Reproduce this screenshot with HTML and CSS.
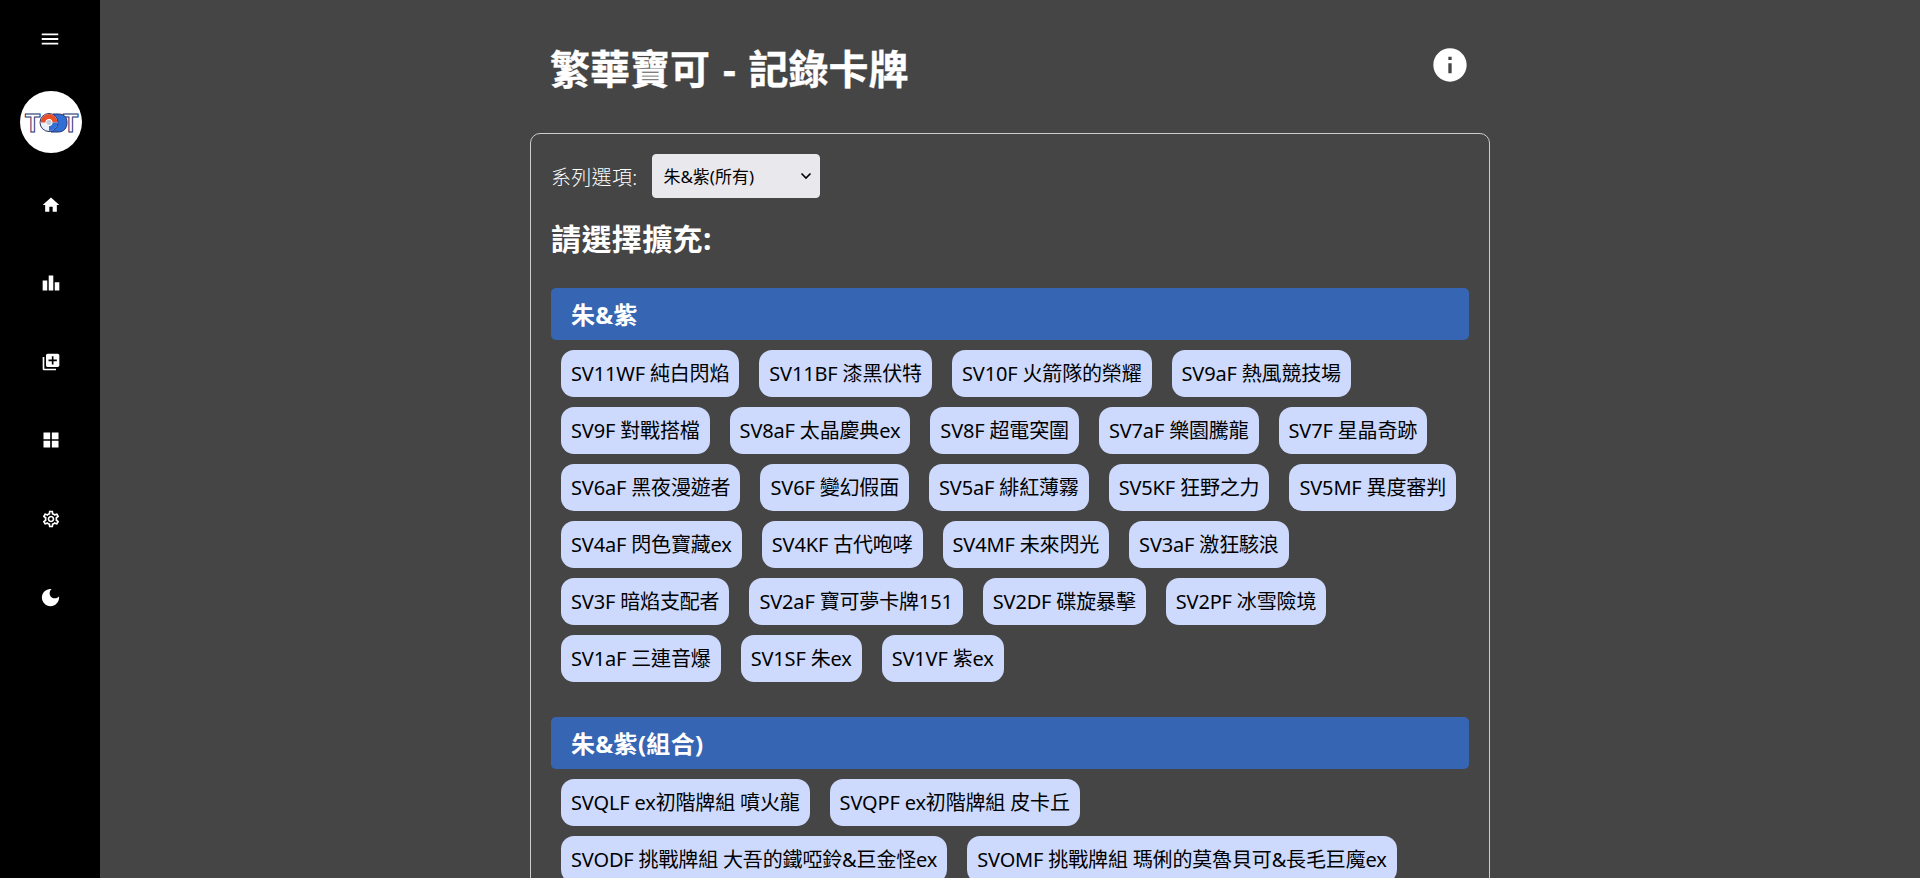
FILE: index.html
```html
<!DOCTYPE html>
<html lang="zh-Hant">
<head>
<meta charset="utf-8">
<title>繁華寶可 - 記錄卡牌</title>
<link rel="stylesheet" href="styles.css">
</head>
<body>
<div class="app">
  <nav class="sidebar">
    <svg class="menu-icon" viewBox="0 0 24 24"><path d="M3 18h18v-2H3v2zm0-5h18v-2H3v2zm0-7v2h18V6H3z"/></svg>
    <div class="logo">
      <svg viewBox="0 0 62 62" width="62" height="62">
        <text x="5" y="41" class="logo-letter">T</text>
        <text x="43" y="41" class="logo-letter">T</text>
        <path d="M33 23h5c6 0 9 3 9 8.500s-3 9.500-9 9.500h-7z" fill="#2f6fd6" stroke="#25336f"/>
        <circle cx="29" cy="31.500" r="9" fill="#eef0f6" stroke="#25336f"/>
        <path d="M20.500 31.500a8.500 8.500 0 0 1 17 0z" fill="#e8502a"/>
        <path d="M29 40a8.500 8.500 0 0 0 8.500-8.500H29z" fill="#2f6fd6"/>
        <circle cx="29" cy="31.500" r="3.200" fill="#c4cad8" stroke="#fff"/>
      </svg>
    </div>
    <div class="nav-slot"><svg class="icon" viewBox="0 0 24 24"><path d="M10 20v-6h4v6h5v-8h3L12 3 2 12h3v8z"/></svg></div>
    <div class="nav-slot"><svg class="icon" viewBox="0 0 24 24"><path d="M7.500 21H2V9h5.500v12zm7.250-18h-5.500v18h5.500V3zM22 11h-5.500v10H22V11z"/></svg></div>
    <div class="nav-slot"><svg class="icon" viewBox="0 0 24 24"><path d="M4 6H2v14c0 1.100.9 2 2 2h14v-2H4V6zm16-4H8c-1.100 0-2 .9-2 2v12c0 1.100.9 2 2 2h12c1.100 0 2-.9 2-2V4c0-1.100-.9-2-2-2zm-1 9h-4v4h-2v-4H9V9h4V5h2v4h4v2z"/></svg></div>
    <div class="nav-slot"><svg class="icon" viewBox="0 0 24 24"><path d="M3 3v8h8V3H3zm10 0v8h8V3h-8zM3 13v8h8v-8H3zm10 0v8h8v-8h-8z"/></svg></div>
    <div class="nav-slot"><svg class="icon" viewBox="0 0 24 24"><path d="M19.43 12.98c.04-.32.07-.64.07-.98 0-.34-.03-.66-.07-.98l2.11-1.65c.19-.15.24-.42.12-.64l-2-3.46c-.09-.16-.26-.25-.44-.25-.06 0-.12.01-.17.03l-2.49 1c-.52-.4-1.08-.73-1.69-.98l-.38-2.65C14.46 2.18 14.25 2 14 2h-4c-.25 0-.46.18-.49.42l-.38 2.65c-.61.25-1.17.59-1.69.98l-2.49-1c-.06-.02-.12-.03-.18-.03-.17 0-.34.09-.43.25l-2 3.46c-.13.22-.07.49.12.64l2.11 1.65c-.04.32-.07.65-.07.98 0 .33.03.66.07.98l-2.11 1.65c-.19.15-.24.42-.12.64l2 3.46c.09.16.26.25.44.25.06 0 .12-.01.17-.03l2.49-1c.52.4 1.08.73 1.69.98l.38 2.65c.03.24.24.42.49.42h4c.25 0 .46-.18.49-.42l.38-2.65c.61-.25 1.17-.59 1.69-.98l2.49 1c.06.02.12.03.18.03.17 0 .34-.09.43-.25l2-3.46c.12-.22.07-.49-.12-.64l-2.11-1.65zm-1.98-1.71c.04.31.05.52.05.73 0 .21-.02.43-.05.73l-.14 1.13.89.7 1.08.84-.7 1.21-1.27-.51-1.04-.42-.9.68c-.43.32-.84.56-1.25.73l-1.06.43-.16 1.13-.2 1.35h-1.4l-.19-1.35-.16-1.13-1.06-.43c-.43-.18-.83-.41-1.23-.71l-.91-.7-1.06.43-1.27.51-.7-1.21 1.08-.84.89-.7-.14-1.13c-.03-.31-.05-.54-.05-.74s.02-.43.05-.73l.14-1.13-.89-.7-1.08-.84.7-1.21 1.27.51 1.04.42.9-.68c.43-.32.84-.56 1.25-.73l1.06-.43.16-1.13.2-1.35h1.39l.19 1.35.16 1.13 1.06.43c.43.18.83.41 1.23.71l.91.7 1.06-.43 1.27-.51.7 1.21-1.07.85-.89.7.14 1.13zM12 8c-2.21 0-4 1.79-4 4s1.79 4 4 4 4-1.79 4-4-1.79-4-4-4zm0 6c-1.100 0-2-.9-2-2s.9-2 2-2 2 .9 2 2-.9 2-2 2z"/></svg></div>
    <div class="nav-slot"><svg class="icon moon" viewBox="0 0 24 24"><path d="M12 3c-4.970 0-9 4.030-9 9s4.030 9 9 9 9-4.030 9-9c0-.46-.04-.92-.1-1.360-.98 1.370-2.580 2.260-4.400 2.260-2.980 0-5.400-2.420-5.400-5.400 0-1.810.89-3.420 2.260-4.400-.44-.06-.9-.1-1.360-.1z"/></svg></div>
  </nav>
  <main class="main">
    <div class="container">
      <header class="page-header">
        <h1 class="title">繁華寶可 - 記錄卡牌</h1>
        <svg class="info-icon" viewBox="0 0 24 24"><path d="M12 2C6.480 2 2 6.480 2 12s4.480 10 10 10 10-4.480 10-10S17.520 2 12 2zm1 15h-2v-6h2v6zm0-8h-2V7h2v2z"/></svg>
      </header>
      <section class="card">
        <div class="series-row">
          <label class="series-label" for="series">系列選項:</label>
          <select class="series-select" id="series"><option>朱&amp;紫(所有)</option></select>
        </div>
        <h2 class="pick-title">請選擇擴充:</h2>
        <div class="group">
          <h3 class="group-title">朱&amp;紫</h3>
          <div class="chips">
            <a class="chip">SV11WF 純白閃焰</a>
            <a class="chip">SV11BF 漆黑伏特</a>
            <a class="chip">SV10F 火箭隊的榮耀</a>
            <a class="chip">SV9aF 熱風競技場</a>
            <a class="chip">SV9F 對戰搭檔</a>
            <a class="chip">SV8aF 太晶慶典ex</a>
            <a class="chip">SV8F 超電突圍</a>
            <a class="chip">SV7aF 樂園騰龍</a>
            <a class="chip">SV7F 星晶奇跡</a>
            <a class="chip">SV6aF 黑夜漫遊者</a>
            <a class="chip">SV6F 變幻假面</a>
            <a class="chip">SV5aF 緋紅薄霧</a>
            <a class="chip">SV5KF 狂野之力</a>
            <a class="chip">SV5MF 異度審判</a>
            <a class="chip">SV4aF 閃色寶藏ex</a>
            <a class="chip">SV4KF 古代咆哮</a>
            <a class="chip">SV4MF 未來閃光</a>
            <a class="chip">SV3aF 激狂駭浪</a>
            <a class="chip">SV3F 暗焰支配者</a>
            <a class="chip">SV2aF 寶可夢卡牌151</a>
            <a class="chip">SV2DF 碟旋暴擊</a>
            <a class="chip">SV2PF 冰雪險境</a>
            <a class="chip">SV1aF 三連音爆</a>
            <a class="chip">SV1SF 朱ex</a>
            <a class="chip">SV1VF 紫ex</a>
          </div>
        </div>
        <div class="group">
          <h3 class="group-title">朱&amp;紫(組合)</h3>
          <div class="chips">
            <a class="chip">SVQLF ex初階牌組 噴火龍</a>
            <a class="chip">SVQPF ex初階牌組 皮卡丘</a>
            <a class="chip">SVODF 挑戰牌組 大吾的鐵啞鈴&amp;巨金怪ex</a>
            <a class="chip">SVOMF 挑戰牌組 瑪俐的莫魯貝可&amp;長毛巨魔ex</a>
          </div>
        </div>
      </section>
    </div>
  </main>
</div>
</body>
</html>
```
FILE: styles.css
```css
* { box-sizing: border-box; }
html, body { margin: 0; height: 100%; overflow: hidden; }
body {
  background: #454545;
  color: #fff;
  font-family: "Noto Sans", "Noto Sans CJK TC", sans-serif;
}
.app { display: flex; height: 878px; }
.sidebar {
  width: 100px;
  flex: none;
  background: #000;
  display: flex;
  flex-direction: column;
  align-items: center;
  padding-top: 28px;
}
.menu-icon { width: 22px; height: 22px; fill: #fff; flex: none; margin-bottom: 41px; }
.logo {
  width: 62px;
  height: 62px;
  margin-left: 1px;
  border-radius: 50%;
  background: #fff;
  flex: none;
  margin-bottom: 12.5px;
  overflow: hidden;
}
.logo-letter {
  font-family: "Liberation Sans", sans-serif;
  font-size: 25px;
  font-weight: 700;
  fill: #fff;
  stroke: #25336f;
  stroke-width: 1;
}
.nav-slot {
  height: 78.5px;
  flex: none;
  padding-left: 1px;
  display: flex;
  align-items: center;
  justify-content: center;
}
.icon { width: 20px; height: 20px; fill: #fff; }
.moon { width: 23px; height: 23px; }
.main { flex: 1; min-width: 0; }
.container { width: 960px; margin: 0 auto; }
.page-header {
  display: flex;
  justify-content: space-between;
  align-items: flex-start;
  height: 133px;
  padding: 40px 20px 0;
}
.title {
  margin: 0;
  font-size: 40px;
  line-height: 58px;
  font-weight: 700;
  word-spacing: 2.5px;
  -webkit-text-stroke: .3px #fff;
}
.info-icon { width: 40px; height: 40px; fill: #fff; margin-top: 5px; }
.card {
  border: 1px solid #ccc;
  border-radius: 10px;
  padding: 20px 20px 0;
  height: 800px;
}
.series-row { display: flex; align-items: center; gap: 15px; height: 44px; }
.series-label { font-size: 20px; font-weight: 300; letter-spacing: .3px; }
.series-select {
  appearance: none;
  width: 168px;
  height: 44px;
  border: 1px solid #e9e9ed;
  border-radius: 4px;
  background: #e9e9ed url("data:image/svg+xml,%3Csvg xmlns='http://www.w3.org/2000/svg' viewBox='0 0 12 8'%3E%3Cpath d='M1.500 1.500 6 6l4.500-4.500' fill='none' stroke='%23000' stroke-width='1.600'/%3E%3C/svg%3E") no-repeat right 7px center / 12px 8px;
  color: #000;
  font-family: inherit;
  font-size: 17px;
  padding: 0 0 0 10px;
}
.pick-title {
  margin: 20px 0 28px;
  font-size: 30px;
  line-height: 42px;
  font-weight: 700;
  letter-spacing: .4px;
}
.group { margin-bottom: 35px; }
.group-title {
  margin: 0;
  height: 52px;
  padding: 0 20px;
  background: #3665b3;
  border-radius: 5px;
  font-size: 24px;
  line-height: 54px;
  font-weight: 700;
  letter-spacing: .3px;
}
.chips {
  display: flex;
  flex-wrap: wrap;
  gap: 10px 20px;
  padding: 10px 10px 0;
}
.chip {
  height: 47px;
  padding: 0 10px;
  background: #cddafd;
  color: #000;
  border-radius: 13px;
  font-size: 20px;
  line-height: 48px;
  letter-spacing: -.16px;
  white-space: nowrap;
}
```
